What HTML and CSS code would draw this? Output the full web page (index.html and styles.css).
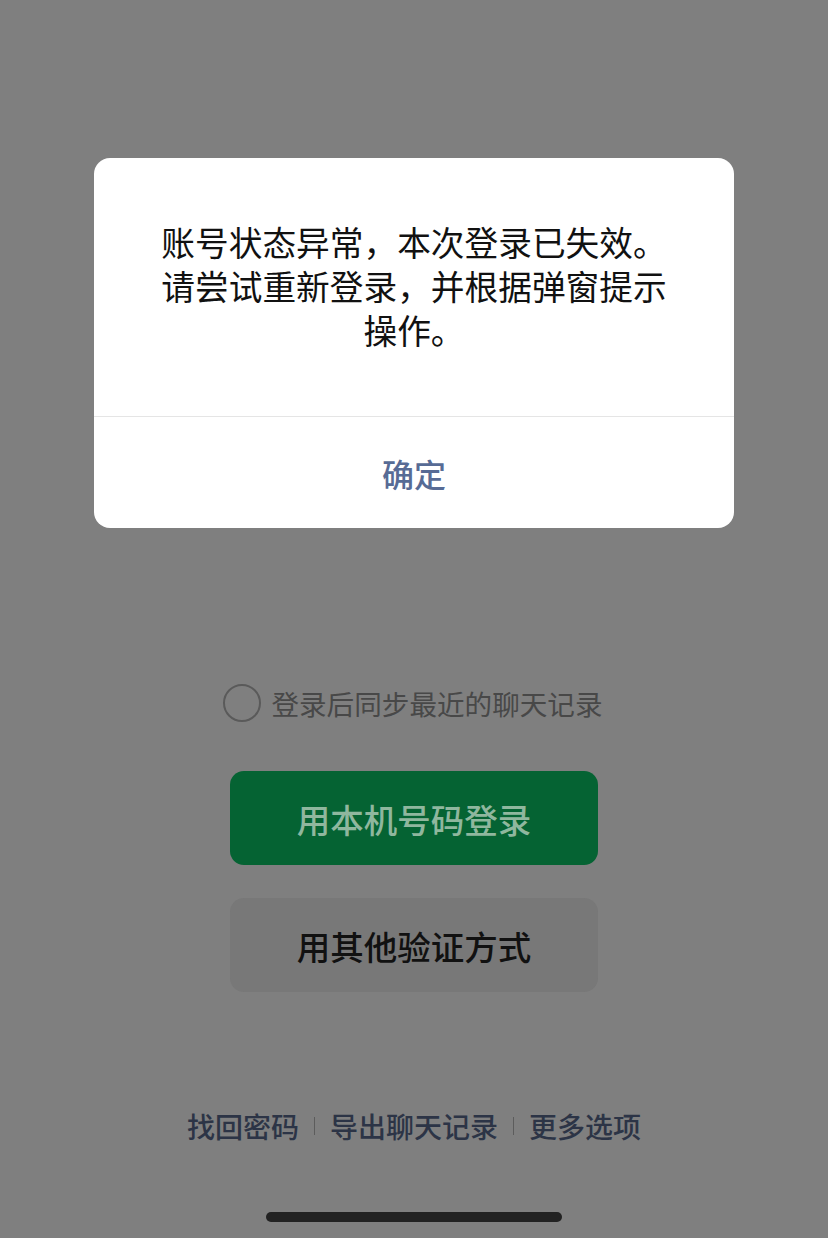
FILE: index.html
```html
<!DOCTYPE html>
<html lang="zh-CN">
<head>
    <meta charset="UTF-8">
    <meta name="viewport" content="width=device-width, initial-scale=1.0">
    <title>登录</title>
    <link rel="stylesheet" href="styles.css">
</head>
<body>

<div class="page">

    <div class="sync-row">
        <span class="radio"></span>
        <span class="sync-label">登录后同步最近的聊天记录</span>
    </div>

    <button class="btn btn-primary">用本机号码登录</button>
    <button class="btn btn-secondary">用其他验证方式</button>

    <div class="footer-links">
        <a class="link">找回密码</a>
        <span class="sep"></span>
        <a class="link">导出聊天记录</a>
        <span class="sep"></span>
        <a class="link">更多选项</a>
    </div>

    <div class="home-bar"></div>

    <!-- alert dialog sits over the dimmed page -->
    <div class="dialog">
        <div class="dialog-body">
            <p class="dialog-line">账号状态异常，本次登录已失效。</p>
            <p class="dialog-line">请尝试重新登录，并根据弹窗提示</p>
            <p class="dialog-line">操作。</p>
        </div>
        <div class="dialog-footer">
            <button class="dialog-btn">确定</button>
        </div>
    </div>

</div>

</body>
</html>
```

FILE: styles.css
```css
body {
    margin: 0;
    background-color: #7f7f7f;
    font-family: "Noto Sans CJK SC", "Noto Sans", sans-serif;
}

.page {
    position: relative;
    height: 1238px;
    display: flex;
    flex-direction: column;
    align-items: center;
    padding-top: 683px;
    box-sizing: border-box;
}

.sync-row {
    display: flex;
    align-items: center;
    gap: 10px;
    height: 40px;
    margin-right: 2px;
}

.radio {
    width: 34px;
    height: 34px;
    border: 2px solid #5a5a5a;
    border-radius: 50%;
}

.sync-label {
    font-size: 27.6px;
    color: #484848;
}

.btn {
    width: 368px;
    height: 94px;
    border: none;
    border-radius: 14px;
    font-family: inherit;
    font-size: 33.5px;
    font-weight: 500;
    padding: 0;
}

.btn-primary {
    margin-top: 48px;
    background-color: #056333;
    color: #8fb79e;
}

.btn-secondary {
    margin-top: 33px;
    background-color: #787878;
    color: #111;
}

.footer-links {
    margin-top: 114px;
    display: flex;
    align-items: center;
    gap: 15px;
    height: 40px;
}

.link {
    font-size: 28px;
    font-weight: 500;
    color: #2c3446;
}

.sep {
    width: 1px;
    height: 18px;
    background-color: #5c5c5c;
}

.home-bar {
    margin-top: 66px;
    width: 296px;
    height: 10px;
    border-radius: 5px;
    background-color: #222;
}

/* Dialog */
.dialog {
    position: absolute;
    top: 158px;
    left: 94px;
    width: 640px;
    background-color: #fff;
    border-radius: 16px;
    overflow: hidden;
}

.dialog-body {
    padding: 62px 20px 64px;
    text-align: center;
    font-size: 33.7px;
    font-weight: 400;
    color: #111;
}

.dialog-line {
    margin: 0;
    height: 44px;
    line-height: 44px;
}

.dialog-footer {
    border-top: 1px solid #e5e5e5;
}

.dialog-btn {
    display: block;
    width: 100%;
    height: 111px;
    border: none;
    background: none;
    font-family: inherit;
    font-size: 32px;
    font-weight: 500;
    color: #576b95;
    padding: 0;
}
```
